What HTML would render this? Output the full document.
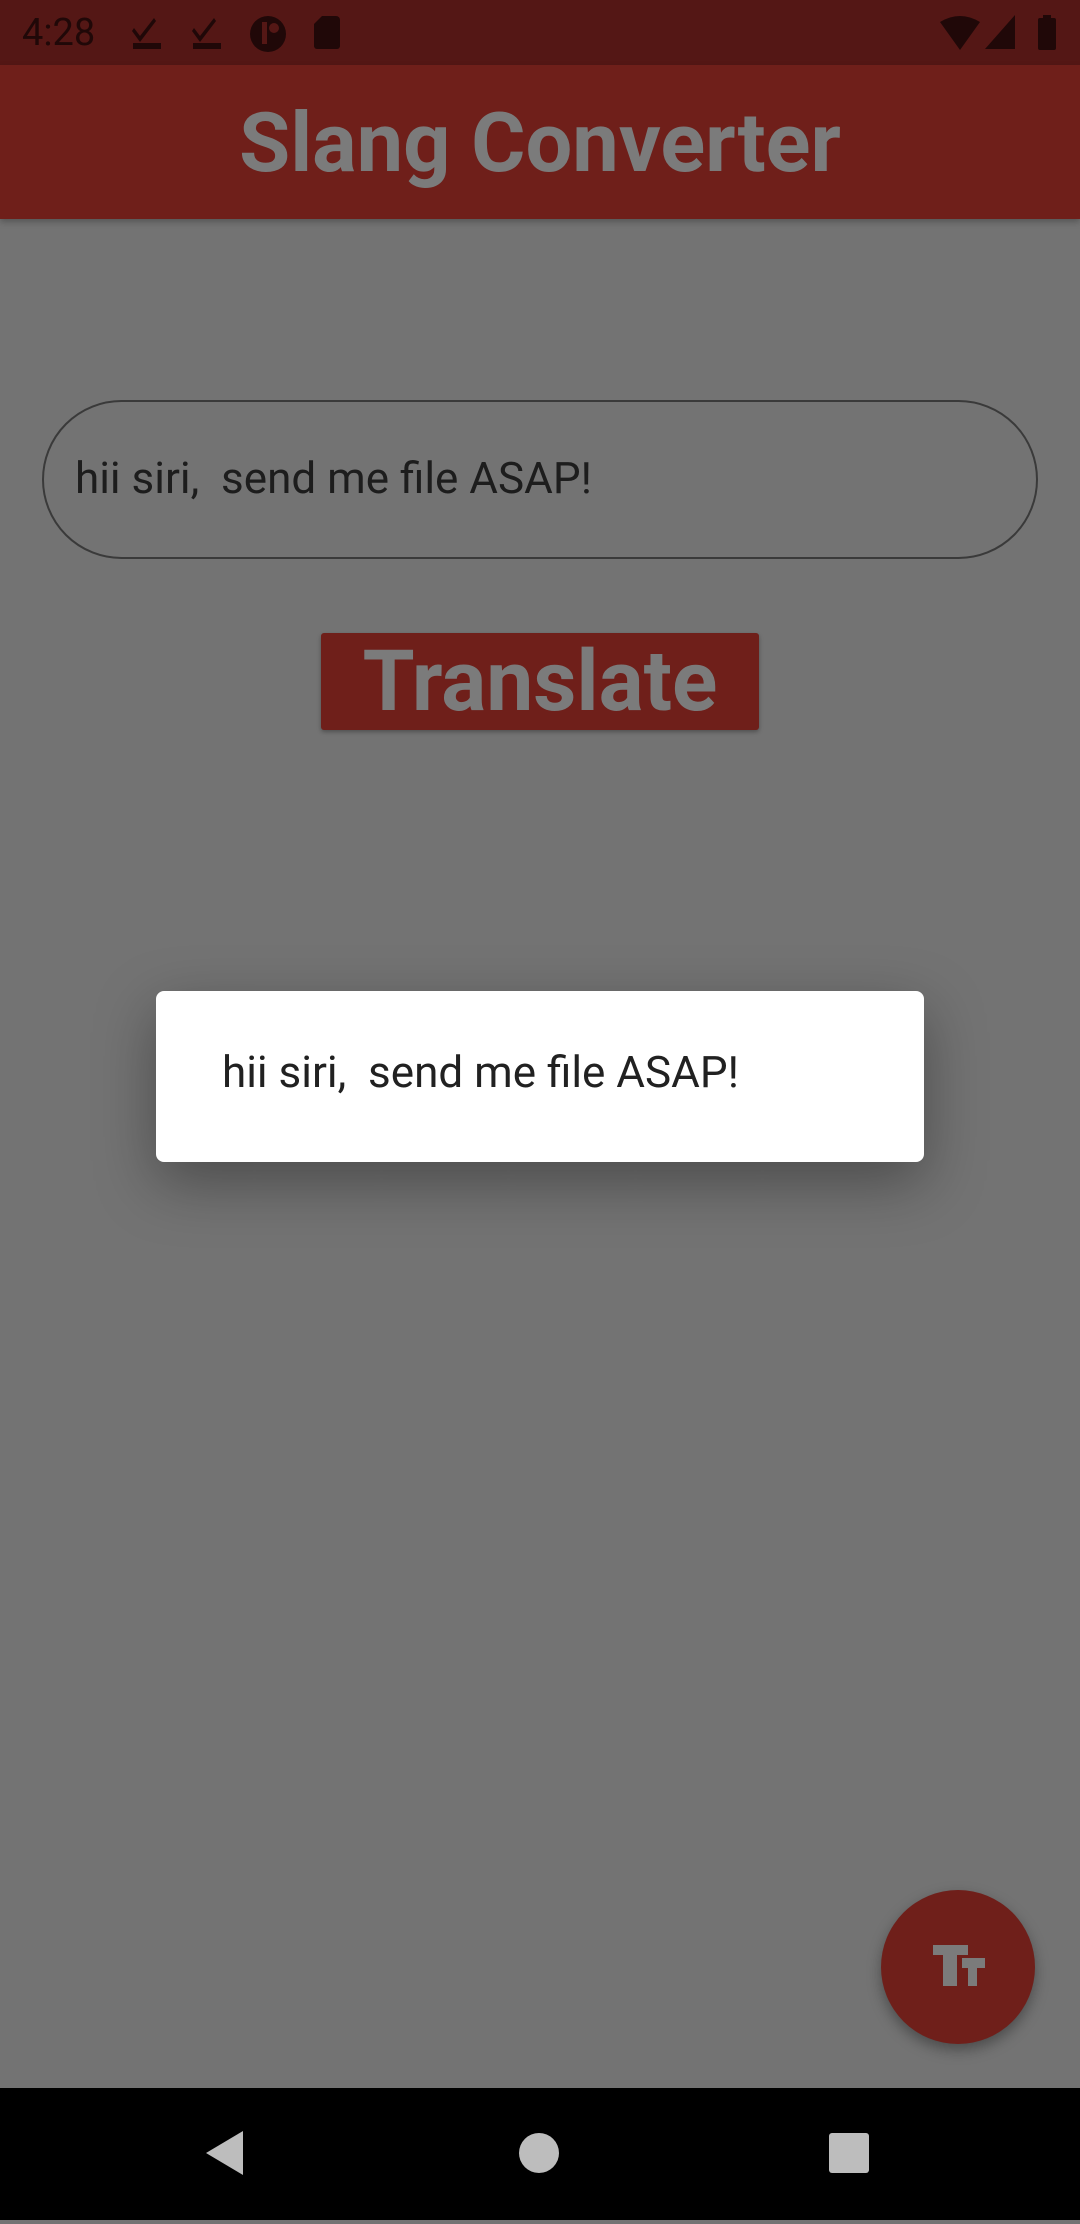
<!DOCTYPE html>
<html><head><meta charset="utf-8"><style>
html,body{margin:0;padding:0;}
body{width:1080px;height:2220px;background:#737373;position:relative;overflow:hidden;font-family:"Roboto","Liberation Sans",sans-serif;}
.sb{position:absolute;left:0;top:0;width:1080px;height:65px;background:#541715;}
.ab{position:absolute;left:0;top:65px;width:1080px;height:154px;background:#6f1f1a;box-shadow:0 3px 6px rgba(0,0,0,.25);}
.title{position:absolute;left:0;width:1080px;top:94px;text-align:center;font-weight:bold;font-size:83px;color:#7b7b7b;line-height:100px;}
.field{position:absolute;left:42px;top:400px;width:992px;height:155px;border:2px solid #3a3a3a;border-radius:80px;}
.ftext{position:absolute;left:75px;top:452px;font-size:44px;color:#1d1d1d;line-height:52px;}
.btn{position:absolute;left:321px;top:633px;width:438px;height:97px;background:#6f1f1a;box-shadow:0 2px 4px rgba(0,0,0,.3);border-radius:3px;text-align:center;font-weight:bold;font-size:84px;line-height:97px;color:#7b7b7b;}
.dlg{position:absolute;left:156px;top:991px;width:768px;height:171px;background:#fff;border-radius:8px;box-shadow:0 20px 60px rgba(0,0,0,.35);}
.dtext{position:absolute;left:222px;top:1046px;font-size:44px;color:#212121;line-height:52px;}
.fab{position:absolute;left:881px;top:1890px;width:154px;height:154px;border-radius:50%;background:#6f1f1a;box-shadow:0 6px 14px rgba(0,0,0,.35);}
.nav{position:absolute;left:0;top:2088px;width:1080px;height:132px;background:#000;}
.st{position:absolute;top:8px;left:22px;font-size:38px;color:#200808;line-height:50px;}
</style></head><body>
<div class="sb">
<div class="st">4:28</div>
<svg width="1080" height="65" style="position:absolute;left:0;top:0" fill="#200808">
<path d="M134 28 l6 8 l14 -18 l2 3 l-16 21 l-8 -11z"/><rect x="133" y="43" width="28" height="6"/>
<path d="M194 28 l6 8 l14 -18 l2 3 l-16 21 l-8 -11z"/><rect x="193" y="43" width="28" height="6"/>
<circle cx="268" cy="34" r="18"/><rect x="262" y="22" width="5" height="22" fill="#541715"/><circle cx="274" cy="28" r="5" fill="#541715"/>
<path d="M322 16 h14 a4 4 0 0 1 4 4 v26 a3 3 0 0 1 -3 3 h-20 a3 3 0 0 1 -3 -3 v-22z"/>
<path d="M940 22 q20 -12 40 0 l-20 28z"/>
<path d="M985 49 l30 -34 v34z"/>
<rect x="1038" y="18" width="18" height="32" rx="2"/><rect x="1043" y="15" width="8" height="4"/>
</svg>
</div>
<div class="ab"></div>
<div class="title">Slang Converter</div>
<div class="field"></div>
<div class="ftext">hii siri,&nbsp; send me file ASAP!</div>
<div class="btn">Translate</div>
<div class="dlg"></div>
<div class="dtext">hii siri,&nbsp; send me file ASAP!</div>
<div class="fab"><svg width="154" height="154" fill="#7b7b7b"><rect x="52" y="55" width="35" height="10"/><rect x="62" y="55" width="14" height="41"/><rect x="81" y="68" width="23" height="10"/><rect x="87" y="68" width="9" height="28"/></svg></div>
<div class="nav"><svg width="1080" height="132">
<path d="M206 65 l37 -22 v44z" fill="#bdbdbd"/>
<circle cx="539" cy="65" r="20" fill="#bdbdbd"/>
<rect x="829" y="45" width="40" height="40" rx="3" fill="#bdbdbd"/>
</svg></div>
</body></html>
